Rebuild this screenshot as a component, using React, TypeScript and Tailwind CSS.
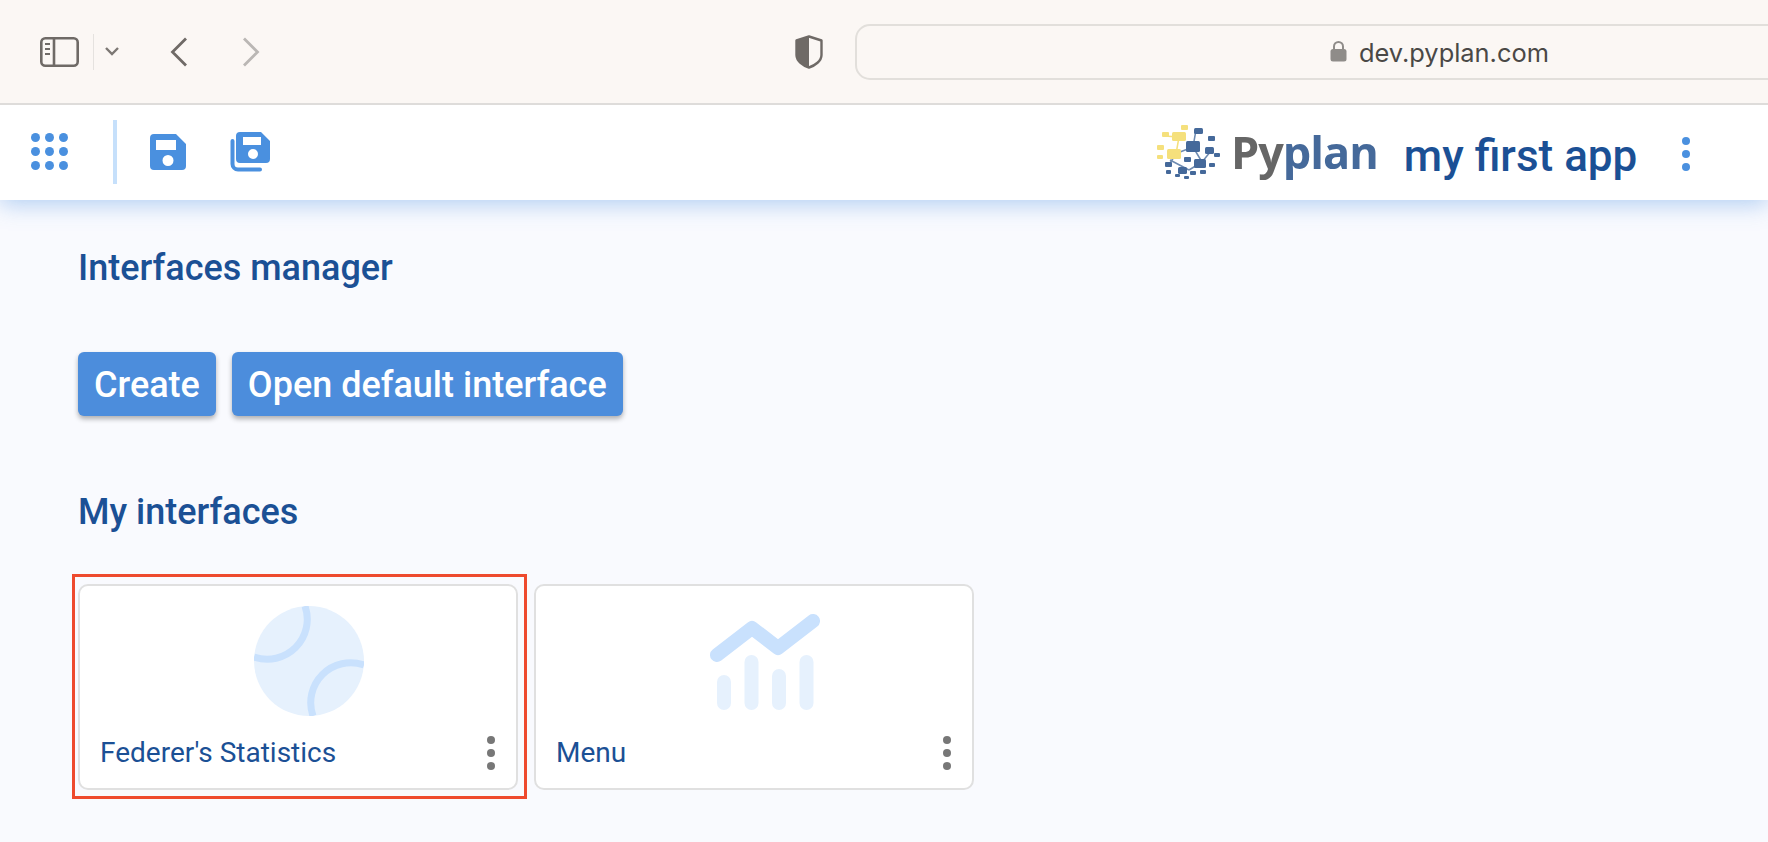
import React from "react";

const Kebab = ({ color, className }: { color: string; className: string }) => (
  <svg width="8" height="34" viewBox="0 0 8 34" className={className} fill={color}>
    <circle cx="4" cy="4" r="4" />
    <circle cx="4" cy="17" r="4" />
    <circle cx="4" cy="30" r="4" />
  </svg>
);

function BrowserBar() {
  return (
    <div className="relative z-20 flex h-[105px] shrink-0 items-center overflow-hidden border-b-2 border-[#dedcda] bg-[#fbf7f4]">
      <svg width="39" height="30" viewBox="0 0 39 30" className="ml-10" fill="none" stroke="#6f6a66" strokeWidth="2.6">
        <rect x="1.3" y="1.3" width="36.4" height="27.4" rx="4" />
        <path d="M14 1v28" />
        <path d="M5 7h5M5 12h5M5 17h5" strokeWidth="2" />
      </svg>
      <div className="ml-[14px] h-9 w-px bg-[#e5e2df]" />
      <svg width="14" height="9" viewBox="0 0 14 9" className="ml-[11px]" fill="none" stroke="#7c7773" strokeWidth="2.4">
        <path d="M1 1l6 6 6-6" />
      </svg>
      <svg width="18" height="30" viewBox="0 0 18 30" className="ml-[51px]" fill="none" stroke="#6f6a66" strokeWidth="2.8">
        <path d="M16 1.5L2.5 15 16 28.5" />
      </svg>
      <svg width="18" height="30" viewBox="0 0 18 30" className="ml-[54px]" fill="none" stroke="#bab7b4" strokeWidth="2.8">
        <path d="M2 1.5L15.5 15 2 28.5" />
      </svg>
      <svg width="28" height="34" viewBox="0 0 28 34" className="ml-[535px]">
        <path d="M14 1.5L26.5 5.5V20C26.5 26 20 30.5 14 32.5 8 30.5 1.5 26 1.5 20V5.5Z" fill="none" stroke="#6f6a66" strokeWidth="2.4" strokeLinejoin="round" />
        <path d="M14 1.5L1.5 5.5V20C1.5 26 8 30.5 14 32.5Z" fill="#6f6a66" />
      </svg>
      <div className="ml-[32px] mr-[-40px] flex h-[56px] flex-1 items-center rounded-[15px] border-2 border-[#e2dfdb] pl-[473px]">
        <svg width="17" height="21" viewBox="0 0 17 21" fill="none">
          <rect x="0.5" y="8" width="16" height="12.5" rx="2.5" fill="#8f8c89" />
          <path d="M4 9V5.5a4.5 4.5 0 0 1 9 0V9" stroke="#8f8c89" strokeWidth="2" />
        </svg>
        <span className="ml-3 mt-[2px] text-[25.4px] leading-none text-[#4a4846] [font-family:Inter,sans-serif]">dev.pyplan.com</span>
      </div>
    </div>
  );
}

function PyplanLogo() {
  const blue = "#45699a";
  const yellow = "#f5e07c";
  return (
    <div className="flex items-center blur-[0.4px]">
      <svg width="66" height="56" viewBox="0 0 66 56">
        <path d="M40 6L37 23M37 23L24 28M37 23L46 38M46 38L33 46M33 46L14 36M55 27L46 38M20 30L12 42" stroke="#6d8ab0" strokeWidth="1.5" fill="none" />
        <path d="M23 13L20 30M8 12L23 13" stroke={yellow} strokeWidth="1.5" fill="none" />
        <rect x="16" y="8" width="14" height="9" rx="1.5" fill={yellow} />
        <rect x="25" y="1" width="7" height="5" rx="1" fill={yellow} />
        <rect x="6" y="8" width="7" height="5" rx="1" fill={yellow} />
        <rect x="1" y="21" width="7" height="5" rx="1" fill={yellow} />
        <rect x="1" y="31" width="6" height="4" rx="1" fill={yellow} />
        <rect x="11" y="25" width="14" height="10" rx="1.5" fill={yellow} />
        <rect x="38" y="4" width="9" height="6" rx="1.5" fill={blue} />
        <rect x="52" y="12" width="7" height="5" rx="1" fill={blue} />
        <rect x="30" y="17" width="14" height="11" rx="1.5" fill={blue} />
        <rect x="49" y="23" width="9" height="7" rx="1.5" fill={blue} />
        <rect x="58" y="29" width="6" height="4" rx="1" fill={blue} />
        <rect x="28" y="33" width="7" height="5" rx="1" fill={blue} />
        <rect x="38" y="35" width="12" height="9" rx="1.5" fill={blue} />
        <rect x="53" y="39" width="6" height="4" rx="1" fill={blue} />
        <rect x="9" y="38" width="7" height="5" rx="1" fill={blue} />
        <rect x="22" y="43" width="9" height="7" rx="1.5" fill={blue} />
        <rect x="10" y="46" width="5" height="4" rx="1" fill={blue} />
        <rect x="19" y="50" width="5" height="3" rx="1" fill={blue} />
        <rect x="28" y="52" width="5" height="3" rx="1" fill={blue} />
        <rect x="34" y="47" width="6" height="4" rx="1" fill={blue} />
        <rect x="44" y="46" width="6" height="4" rx="1" fill={blue} />
      </svg>
      <span className="ml-[9px] text-[45px] font-bold leading-none tracking-[-1px] [font-family:'Open_Sans',sans-serif]">
        <span className="text-[#666666]">Py</span>
        <span className="text-[#45699a]">plan</span>
      </span>
    </div>
  );
}

function AppToolbar() {
  const dots = [0, 1, 2, 3, 4, 5, 6, 7, 8];
  return (
    <div className="relative z-10 flex h-[95px] shrink-0 items-center bg-white pb-[2px] shadow-[0_4px_22px_rgba(74,144,226,0.42)]">
      <div className="ml-[31px] grid w-[37px] grid-cols-3 gap-[4.6px]">
        {dots.map((d) => (
          <div key={d} className="h-[9px] w-[9px] rounded-full bg-[#4a90df]" />
        ))}
      </div>
      <div className="ml-[45px] h-16 w-1 bg-[#c6e0fb]" />
      <svg width="36" height="36" viewBox="0 0 36 36" className="ml-[33px]" fill="#4a90df">
        <path fillRule="evenodd" d="M4 0H26L36 10V32A4 4 0 0 1 32 36H4A4 4 0 0 1 0 32V4A4 4 0 0 1 4 0ZM6 6V16H26V6ZM18 21A5.5 5.5 0 1 0 18 32 5.5 5.5 0 0 0 18 21Z" />
      </svg>
      <svg width="40" height="40" viewBox="0 0 40 40" className="ml-[44px]" fill="#4a90df">
        <path fillRule="evenodd" d="M10 0H31L40 9V27A4 4 0 0 1 36 31H10A4 4 0 0 1 6 27V4A4 4 0 0 1 10 0ZM13 5V13H31V5ZM23 17A5 5 0 1 0 23 27 5 5 0 0 0 23 17Z" />
        <path d="M2.5 9V32A5.5 5.5 0 0 0 8 37.5H30" fill="none" stroke="#4a90df" strokeWidth="4" strokeLinecap="round" />
      </svg>
      <div className="ml-[886px]">
        <PyplanLogo />
      </div>
      <span className="ml-[26px] mt-[9px] text-[44px] font-medium leading-none text-[#1b5095] [font-family:Roboto,sans-serif]">my first app</span>
      <Kebab color="#4a90df" className="ml-[45px] mt-[5px]" />
    </div>
  );
}

function TennisBall() {
  return (
    <svg width="110" height="110" viewBox="0 0 110 110" className="ml-[22px]" fill="none">
      <circle cx="55" cy="55" r="55" fill="#e6f1fd" />
      <path d="M51 0A40 40 0 0 1 0 51" stroke="#c9e1fd" strokeWidth="7" />
      <path d="M59 110A40 40 0 0 1 110 59" stroke="#c9e1fd" strokeWidth="7" />
    </svg>
  );
}

function ChartIcon() {
  return (
    <svg width="110" height="110" viewBox="0 0 110 110" className="ml-[22px]" fill="none">
      <rect x="7" y="69" width="14" height="35" rx="7" fill="#e6f1fd" />
      <rect x="34.5" y="49" width="14" height="55" rx="7" fill="#e6f1fd" />
      <rect x="62" y="63" width="14" height="41" rx="7" fill="#e6f1fd" />
      <rect x="89.5" y="49" width="14" height="55" rx="7" fill="#e6f1fd" />
      <path d="M7 49L42 22L68 42L103 15" stroke="#c9e1fd" strokeWidth="14" strokeLinecap="round" strokeLinejoin="round" />
    </svg>
  );
}

function InterfaceCard({ title, icon, selected }: { title: string; icon: React.ReactNode; selected?: boolean }) {
  return (
    <div className="relative h-[206px] w-[440px] rounded-[10px] border-2 border-[#e0e0e0] bg-white">
      <div className="flex justify-center pt-5">{icon}</div>
      <div className="mt-5 flex items-center justify-between pl-5 pr-[21px]">
        <span className="text-[28px] leading-[34px] text-[#1b5095] [font-family:Roboto,sans-serif]">{title}</span>
        <Kebab color="#777777" className="" />
      </div>
      {selected && <div className="absolute -top-[12px] -right-[11px] -bottom-[11px] -left-[8px] border-[3px] border-[#ee4a2e]" />}
    </div>
  );
}

export default function App() {
  return (
    <div className="flex h-[842px] w-[1768px] flex-col overflow-hidden bg-[#f9fafe] [font-family:Roboto,sans-serif]">
      <BrowserBar />
      <AppToolbar />
      <div className="px-[78px]">
        <h1 className="mt-[48px] text-[36px] font-medium leading-10 text-[#1b5095]">Interfaces manager</h1>
        <div className="mt-[64px] flex gap-4">
          <button className="h-16 rounded-md bg-[#4c8ddc] px-4 pt-[2px] text-[36px] font-medium text-white shadow-[0_3px_5px_rgba(0,0,0,0.3)]">Create</button>
          <button className="h-16 rounded-md bg-[#4c8ddc] px-4 pt-[2px] text-[36px] font-medium text-white shadow-[0_3px_5px_rgba(0,0,0,0.3)]">Open default interface</button>
        </div>
        <h2 className="mt-[76px] text-[36px] font-medium leading-10 text-[#1b5095]">My interfaces</h2>
        <div className="mt-[52px] flex gap-4">
          <InterfaceCard title="Federer's Statistics" icon={<TennisBall />} selected />
          <InterfaceCard title="Menu" icon={<ChartIcon />} />
        </div>
      </div>
    </div>
  );
}
